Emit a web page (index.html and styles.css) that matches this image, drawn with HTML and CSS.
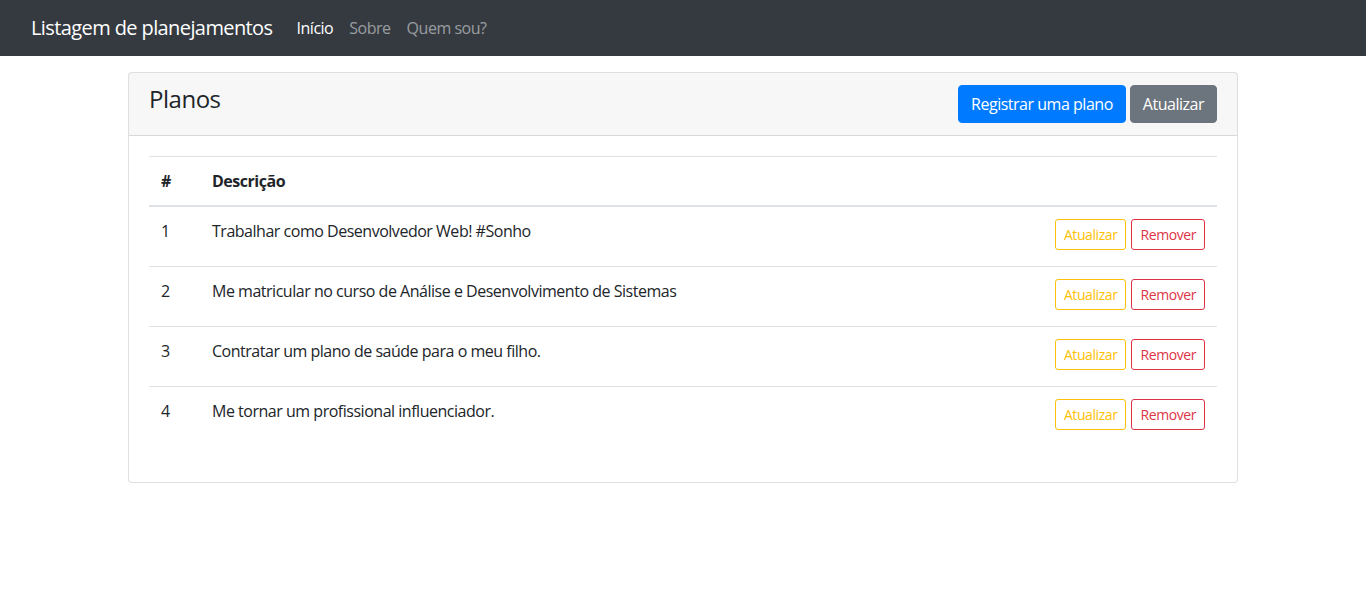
FILE: index.html
```html
<!DOCTYPE html>
<html lang="pt-BR">
<head>
<meta charset="utf-8">
<title>Listagem de planejamentos</title>
<link rel="stylesheet" href="styles.css">
</head>
<body>
<nav class="navbar">
  <a class="brand" href="#">Listagem de planejamentos</a>
  <ul class="nav">
    <li><a class="nav-link active" href="#">Início</a></li>
    <li><a class="nav-link" href="#">Sobre</a></li>
    <li><a class="nav-link" href="#">Quem sou?</a></li>
  </ul>
</nav>
<main class="container">
  <section class="card">
    <header class="card-header">
      <h4 class="card-title">Planos</h4>
      <div class="header-actions">
        <button class="btn btn-primary">Registrar uma plano</button>
        <button class="btn btn-secondary">Atualizar</button>
      </div>
    </header>
    <div class="card-body">
      <table class="table">
        <thead>
          <tr>
            <th class="col-num">#</th>
            <th>Descrição</th>
            <th></th>
          </tr>
        </thead>
        <tbody>
          <tr>
            <td>1</td>
            <td>Trabalhar como Desenvolvedor Web! #Sonho</td>
            <td><div class="row-actions"><button class="btn-sm btn-outline-warning">Atualizar</button><button class="btn-sm btn-outline-danger">Remover</button></div></td>
          </tr>
          <tr>
            <td>2</td>
            <td>Me matricular no curso de Análise e Desenvolvimento de Sistemas</td>
            <td><div class="row-actions"><button class="btn-sm btn-outline-warning">Atualizar</button><button class="btn-sm btn-outline-danger">Remover</button></div></td>
          </tr>
          <tr>
            <td>3</td>
            <td>Contratar um plano de saúde para o meu filho.</td>
            <td><div class="row-actions"><button class="btn-sm btn-outline-warning">Atualizar</button><button class="btn-sm btn-outline-danger">Remover</button></div></td>
          </tr>
          <tr>
            <td>4</td>
            <td>Me tornar um profissional influenciador.</td>
            <td><div class="row-actions"><button class="btn-sm btn-outline-warning">Atualizar</button><button class="btn-sm btn-outline-danger">Remover</button></div></td>
          </tr>
        </tbody>
      </table>
    </div>
  </section>
</main>
</body>
</html>
```
FILE: styles.css
```css
* { box-sizing: border-box; }

body {
  margin: 0;
  font-family: "Open Sans", "Noto Sans", "Liberation Sans", sans-serif;
  font-size: 16px;
  line-height: 1.5;
  letter-spacing: -0.03em;
  color: #212529;
  background: #fff;
}

.navbar {
  display: flex;
  align-items: center;
  height: 56px;
  padding: 0 31px;
  background: #343a40;
}

.brand {
  font-size: 20px;
  line-height: 30px;
  letter-spacing: -0.03em;
  color: #fff;
  text-decoration: none;
  margin-right: 16px;
}

.nav {
  display: flex;
  list-style: none;
  margin: 0;
  padding: 0;
}

.nav-link {
  display: block;
  padding: 8px;
  color: rgba(255, 255, 255, 0.5);
  text-decoration: none;
}

.nav-link.active { color: #fff; }

.container {
  width: 1110px;
  margin: 16px auto 0;
}

.card {
  border: 1px solid rgba(0, 0, 0, 0.125);
  border-radius: 4px;
  background: #fff;
}

.card-header {
  display: flex;
  justify-content: space-between;
  align-items: flex-start;
  padding: 12px 20px;
  background: rgba(0, 0, 0, 0.03);
  border-bottom: 1px solid rgba(0, 0, 0, 0.125);
}

.card-title {
  margin: 0;
  font-size: 24px;
  font-weight: 500;
  line-height: 1.2;
  letter-spacing: -0.02em;
}

.header-actions {
  display: flex;
  gap: 4px;
}

.btn {
  font-family: inherit;
  font-size: 16px;
  line-height: 24px;
  letter-spacing: -0.03em;
  padding: 6px 12px;
  border: 1px solid transparent;
  border-radius: 4px;
  color: #fff;
  cursor: pointer;
}

.btn-primary { background: #007bff; border-color: #007bff; }
.btn-secondary { background: #6c757d; border-color: #6c757d; }

.card-body { padding: 20px; }

.table {
  width: 100%;
  border-collapse: collapse;
  margin-bottom: 16px;
}

.table th,
.table td {
  padding: 12px;
  border-top: 1px solid #dee2e6;
  vertical-align: top;
  text-align: left;
}

.table thead th {
  vertical-align: bottom;
  border-bottom: 2px solid #dee2e6;
  font-weight: 700;
}

.col-num { width: 51px; }

.row-actions {
  display: flex;
  justify-content: flex-end;
  align-items: flex-start;
  gap: 5px;
  height: 35px;
}

.btn-sm {
  font-family: inherit;
  font-size: 14px;
  line-height: 21px;
  letter-spacing: -0.03em;
  padding: 4px 8px;
  background: transparent;
  border: 1px solid;
  border-radius: 3px;
  cursor: pointer;
}

.btn-outline-warning { color: #ffc107; border-color: #ffc107; }
.btn-outline-danger { color: #dc3545; border-color: #dc3545; }
```
